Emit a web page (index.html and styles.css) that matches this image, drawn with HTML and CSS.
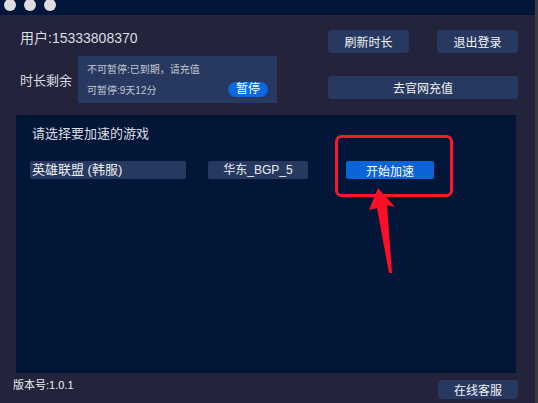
FILE: index.html
```html
<!DOCTYPE html>
<html lang="zh-CN">
<head>
<meta charset="utf-8">
<meta name="viewport" content="width=device-width, initial-scale=1.0">
<title>加速器</title>
<link rel="stylesheet" href="styles.css">
</head>
<body>

<div class="app">
    <div class="titlebar">
        <span class="dot"></span>
        <span class="dot"></span>
        <span class="dot"></span>
    </div>

    <div class="header">
        <div class="account">
            <div class="user">用户:15333808370</div>
            <div class="remain">
                <span class="remain-label">时长剩余</span>
                <div class="remain-box">
                    <div class="remain-line">不可暂停:已到期，请充值</div>
                    <div class="remain-row">
                        <span>可暂停:9天12分</span>
                        <button class="pill">暂停</button>
                    </div>
                </div>
            </div>
        </div>
        <div class="actions">
            <div class="actions-row">
                <button class="btn">刷新时长</button>
                <button class="btn">退出登录</button>
            </div>
            <button class="btn btn-wide">去官网充值</button>
        </div>
    </div>

    <div class="panel">
        <div class="panel-title">请选择要加速的游戏</div>
        <div class="game-row">
            <div class="field field-game">英雄联盟 (韩服)</div>
            <div class="field field-node">华东_BGP_5</div>
            <button class="start">开始加速</button>
        </div>
    </div>

    <div class="footer">
        <span class="version">版本号:1.0.1</span>
        <button class="btn btn-service">在线客服</button>
    </div>

    <svg class="annotation" width="538" height="403" viewBox="0 0 538 403">
        <rect x="336.5" y="136.5" width="115" height="59" rx="5" fill="none" stroke="#ff1530" stroke-width="3"/>
        <polygon points="378,188 395,207 387,205 392,273 389,273 377,208 369,210" fill="#ff0f26"/>
    </svg>
</div>

</body>
</html>
```

FILE: styles.css
```css
* {
    box-sizing: border-box;
}
html, body {
    margin: 0;
    padding: 0;
}
body {
    width: 538px;
    height: 403px;
    background-color: #3a3a3e;
    overflow: hidden;
    font-family: "Liberation Sans", "Noto Sans CJK SC", sans-serif;
    color: #dcdde2;
}
button {
    font-family: inherit;
    border: none;
    padding: 0;
    margin: 0;
    cursor: pointer;
}
.app {
    position: relative;
    width: 535px;
    height: 403px;
    background-color: #23243b;
}
.titlebar {
    display: flex;
    gap: 8px;
    height: 15px;
    padding-left: 4px;
    background-color: #021639;
    overflow: hidden;
}
.dot {
    width: 12px;
    height: 12px;
    margin-top: -1px;
    border-radius: 50%;
    background-color: #dcdcde;
}
.header {
    display: flex;
    justify-content: space-between;
    height: 100px;
    padding: 15px 17px 0 20px;
}
.user {
    font-size: 14px;
    line-height: 16px;
}
.remain {
    display: flex;
    align-items: center;
    gap: 6px;
    margin-top: 10px;
}
.remain-label {
    font-size: 13px;
    width: 52px;
}
.remain-box {
    width: 199px;
    height: 47px;
    padding: 7px 9px 0 9px;
    background-color: #273960;
    font-size: 10px;
    color: #c4c7d0;
}
.remain-line {
    line-height: 14px;
}
.remain-row {
    display: flex;
    justify-content: space-between;
    align-items: center;
    margin-top: 5px;
    height: 15px;
}
.pill {
    width: 40px;
    height: 15px;
    border-radius: 8px;
    background-color: #0b68de;
    color: #fff;
    font-size: 12px;
    line-height: 15px;
}
.actions {
    width: 190px;
}
.actions-row {
    display: flex;
    justify-content: space-between;
}
.btn {
    width: 81px;
    height: 23px;
    border-radius: 4px;
    background-color: #273960;
    color: #f2f3f5;
    font-size: 12px;
}
.btn-wide {
    width: 190px;
    margin-top: 23px;
}
.panel {
    height: 258px;
    margin: 0 19px 0 16px;
    padding: 11px 14px 0 14px;
    background-color: #031638;
}
.panel-title {
    font-size: 13px;
    line-height: 16px;
    padding-left: 2px;
}
.game-row {
    display: flex;
    margin-top: 19px;
}
.field {
    height: 18px;
    line-height: 18px;
    font-size: 13px;
    border-radius: 2px;
    background-color: #273960;
    color: #eceef2;
}
.field-game {
    width: 156px;
    padding-left: 2px;
}
.field-node {
    width: 100px;
    margin-left: 22px;
    font-size: 12px;
    text-align: center;
}
.start {
    width: 88px;
    height: 18px;
    margin-left: 38px;
    border-radius: 2px;
    background-color: #0b64d8;
    color: #fff;
    font-size: 12px;
}
.footer {
    display: flex;
    justify-content: space-between;
    align-items: flex-start;
    padding: 7px 17px 0 13px;
}
.version {
    margin-top: -2px;
    font-size: 11px;
    line-height: 14px;
    color: #eef0f3;
}
.btn-service {
    width: 80px;
    height: 19px;
}
.annotation {
    position: absolute;
    top: 0;
    left: 0;
    pointer-events: none;
}
```
